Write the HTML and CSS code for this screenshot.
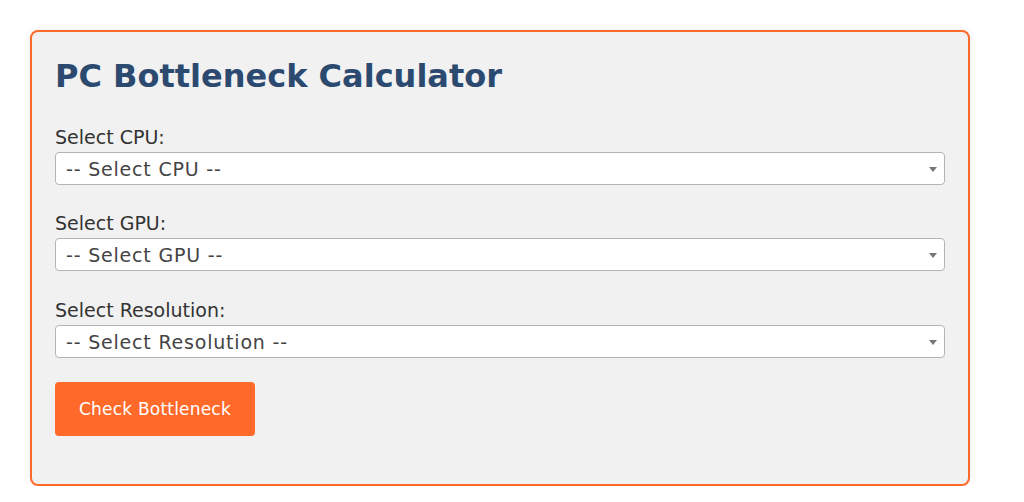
FILE: index.html
```html
<!DOCTYPE html>
<html>
<head>
	<meta charset="utf-8">
	<title>PC Bottleneck Calculator</title>
	<link rel="stylesheet" href="styles.css">
</head>
<body>
	<div class="calc-card">
		<h1 class="calc-title">PC Bottleneck Calculator</h1>
		<form class="calc-form">
			<div class="field">
				<label class="field-label" for="cpu">Select CPU:</label>
				<div class="select-wrap">
					<select id="cpu" class="field-select">
						<option>-- Select CPU --</option>
					</select>
				</div>
			</div>
			<div class="field">
				<label class="field-label" for="gpu">Select GPU:</label>
				<div class="select-wrap">
					<select id="gpu" class="field-select">
						<option>-- Select GPU --</option>
					</select>
				</div>
			</div>
			<div class="field">
				<label class="field-label" for="resolution">Select Resolution:</label>
				<div class="select-wrap">
					<select id="resolution" class="field-select">
						<option>-- Select Resolution --</option>
					</select>
				</div>
			</div>
			<button type="button" class="calc-btn">Check Bottleneck</button>
		</form>
	</div>
</body>
</html>
```
FILE: styles.css
```css
* {
	margin: 0;
	padding: 0;
	box-sizing: border-box;
}
body {
	font-family: 'DejaVu Sans', Arial, sans-serif;
	background-color: #fff;
	padding: 30px 0 0 30px;
}
.calc-card {
	width: 940px;
	padding: 24px 23px 48px;
	background-color: #f1f1f1;
	border: 2px solid #ff6a2b;
	border-radius: 8px;
	box-shadow: 0 0 8px rgba(0, 0, 0, 0.08);
}
.calc-title {
	font-size: 32px;
	line-height: 40px;
	font-weight: 700;
	color: #2c4a6f;
	margin-bottom: 30px;
}
.calc-form {
	display: flex;
	flex-direction: column;
	align-items: flex-start;
}
.field {
	width: 100%;
}
.field + .field {
	margin-top: 27px;
}
.field:last-of-type {
	margin-top: 28px;
}
.field-label {
	display: block;
	font-size: 19px;
	line-height: 22px;
	color: #333;
	margin-bottom: 4px;
}
.select-wrap {
	position: relative;
}
.select-wrap::after {
	content: "";
	position: absolute;
	top: 50%;
	right: 8px;
	margin-top: -2px;
	border-left: 4.5px solid transparent;
	border-right: 4.5px solid transparent;
	border-top: 5px solid #777;
	pointer-events: none;
}
.field-select {
	display: block;
	width: 100%;
	height: 33px;
	padding: 0 24px 0 10px;
	font-family: inherit;
	font-size: 19px;
	letter-spacing: 0.8px;
	color: #444;
	background-color: #fff;
	border: 1px solid #b4b4b4;
	border-radius: 4px;
	appearance: none;
	-webkit-appearance: none;
	outline: none;
}
.calc-btn {
	margin-top: 24px;
	width: 200px;
	height: 54px;
	font-family: inherit;
	font-size: 17px;
	letter-spacing: 0.2px;
	color: #fff;
	background-color: #ff6a2b;
	border: none;
	border-radius: 4px;
	cursor: pointer;
}
```
